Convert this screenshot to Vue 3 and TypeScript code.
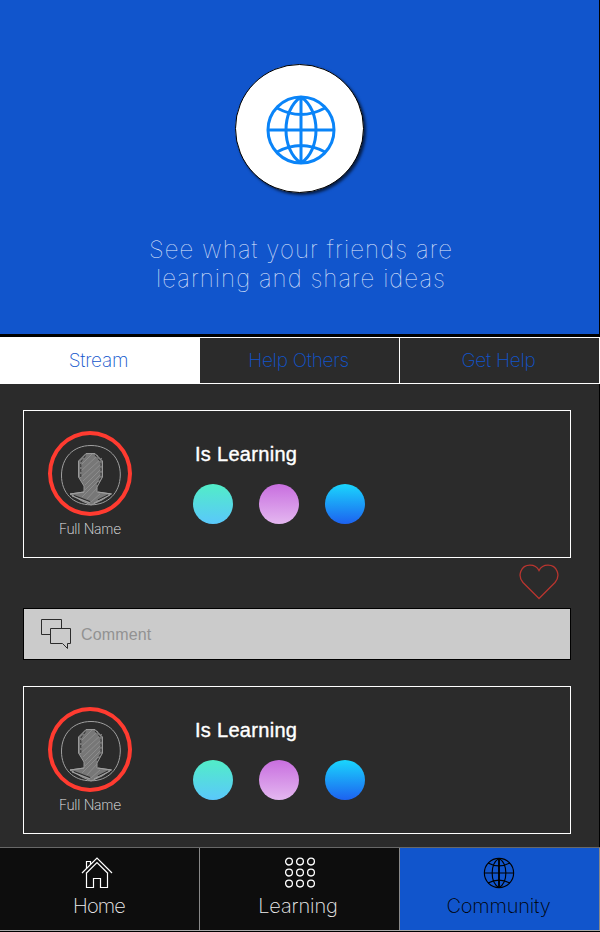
<script setup lang="ts">
import { ref } from 'vue'

interface Post {
  id: number
  name: string
  topics: string[]
  commentable: boolean
}

const tabs = ['Stream', 'Help Others', 'Get Help']
const activeTab = ref('Stream')
const page = ref('Community')

const posts: Post[] = [
  { id: 1, name: 'Full Name', topics: ['mint', 'orchid', 'azure'], commentable: true },
  { id: 2, name: 'Full Name', topics: ['mint', 'orchid', 'azure'], commentable: false },
]
const dots = [5, 16, 27]
</script>

<template>
  <div class="screen">
    <header class="hero">
      <div class="badge">
        <svg class="globe" viewBox="0 0 70 70">
          <circle cx="35" cy="35" r="33" />
          <path d="M35 2V68M2 35H68M35 2C15 15 15 55 35 68M35 2C55 15 55 55 35 68M11 13Q35 26 59 13M11 57Q35 44 59 57" />
        </svg>
      </div>
      <p class="tagline"><span class="line one">See what your friends are</span><span class="line two">learning and share ideas</span></p>
    </header>

    <nav class="tabs">
      <button v-for="tab in tabs" :key="tab" class="tab" :class="{ active: tab === activeTab }" @click="activeTab = tab">
        {{ tab }}
      </button>
    </nav>

    <main class="feed">
      <article v-for="post in posts" :key="post.id" class="post">
        <section class="card">
          <div class="person">
            <div class="ring">
              <svg class="avatar" viewBox="0 0 62 62">
                <path class="rim" d="M31 1.5C49 1.5 60.5 14 60.3 31C60 49 48 60.8 31 60.8C13 60.8 1.3 49 1.5 31C1.7 14 13 1.5 31 1.5Z" />
                <path class="body" d="M26 9.5H35L42.5 17V33L37 43V48L51 50L42 56L31 61L22 57L10 50L24 48V42L18.5 33V17Z" />
                <path class="hatch" d="M20 22L32 10M20 28L38 11M20 34L42 14M23 37L42 19M25 41L42 24M25 46L41 30M22 53L38 37M26 56L37 44M31 58L40 50" />
                <path class="dash" d="M20.8 33V18L26 11M35 11L41 18V33L37 41" />
                <path class="gap" d="M14 51.5L30 57.5M48 51L38 56" />
                <path class="rim" d="M10 50L24 48M12 52L30 59M38 48L52 50M50 51L34 59" />
              </svg>
            </div>
            <span class="name">{{ post.name }}</span>
          </div>
          <div class="learning">
            <h2>Is Learning</h2>
            <div class="topics">
              <span v-for="topic in post.topics" :key="topic" class="topic" :class="topic"></span>
            </div>
          </div>
        </section>
        <template v-if="post.commentable">
          <div class="actions">
            <svg class="heart" viewBox="0 0 40 36">
              <path d="M20 34.5L4 18.5C-2 11.5 2 1.2 11 1.2C15.5 1.2 18.5 3.5 20 6.5C21.5 3.5 24.5 1.2 29 1.2C38 1.2 42 11.5 36 18.5Z" />
            </svg>
          </div>
          <div class="comment">
            <svg class="bubbles" viewBox="0 0 31 31">
              <path d="M9.5 15.5H.5V.5H20.5V9.5M9.5 9.5H29.5V24.5H26.5V29.5L21.5 24.5H9.5Z" />
            </svg>
            <span>Comment</span>
          </div>
        </template>
      </article>
    </main>

    <footer class="dock">
      <button class="item" :class="{ current: page === 'Home' }" @click="page = 'Home'">
        <svg viewBox="0 0 32 32">
          <path d="M1 16L16 1L31 16M5.5 16V30.5H12.5V21.5H19.5V30.5H26.5V16M5 16.5L16 5.5L27 16.5M5.5 12V4.5H9.5V7.5" />
        </svg>
        <span class="home">Home</span>
      </button>
      <button class="item" :class="{ current: page === 'Learning' }" @click="page = 'Learning'">
        <svg class="grid" viewBox="0 0 32 32">
          <template v-for="y in dots" :key="y">
            <circle v-for="x in dots" :key="x" :cx="x" :cy="y - 0.4" r="3.4" />
          </template>
        </svg>
        <span class="learn">Learning</span>
      </button>
      <button class="item" :class="{ current: page === 'Community' }" @click="page = 'Community'">
        <svg viewBox="0 0 70 70" class="small-globe">
          <circle cx="35" cy="35" r="32" />
          <path d="M3 35H67M35 3C15 15 15 55 35 67M35 3C55 15 55 55 35 67M11 13Q35 26 59 13M11 57Q35 44 59 57" />
          <path class="axis" d="M35 3V67" />
        </svg>
        <span class="comm">Community</span>
      </button>
    </footer>
  </div>
</template>

<style>
body {
  margin: 0;
  background: #000;
}
</style>

<style scoped>
* {
  box-sizing: border-box;
}
svg {
  display: block;
  fill: none;
}
button {
  margin: 0;
  padding: 0;
  border: 0;
  background: none;
  font: inherit;
  color: inherit;
}
.screen {
  display: flex;
  flex-direction: column;
  width: 600px;
  height: 932px;
  overflow: hidden;
  background: #000;
  font-family: Inter, "Liberation Sans", sans-serif;
  font-weight: 200;
}
.hero {
  display: flex;
  flex: none;
  flex-direction: column;
  align-items: center;
  width: 599px;
  height: 334px;
  padding-top: 64px;
  background: #1155cc;
}
.badge {
  display: grid;
  place-items: center;
  width: 129px;
  height: 129px;
  padding: 2px 0 0 2px;
  border: 1px solid #000;
  border-radius: 50%;
  background: #fff;
  box-shadow: 2px 2px 3px rgba(0, 0, 0, 0.65);
}
.globe {
  width: 70px;
  height: 70px;
  stroke: #0a84f8;
  stroke-width: 3;
}
.tagline {
  display: flex;
  flex-direction: column;
  align-items: center;
  margin: 42px 0 0;
  padding-left: 3px;
  color: #e8f0ff;
  font-size: 24px;
  font-weight: 100;
  line-height: 29px;
  white-space: nowrap;
}
.line {
  letter-spacing: 1.05px;
}
.one {
  letter-spacing: 1.1px;
}
.tabs {
  display: grid;
  flex: none;
  grid-template-columns: 200px 200px 200px;
  height: 47px;
  margin-top: 3px;
  border-top: 1px solid #fff;
  border-bottom: 1px solid #fff;
  background: #2b2b2b;
}
.tab {
  padding-right: 2px;
  border-right: 1px solid #fff;
  color: #1155cc;
  font-size: 19px;
  font-weight: 200;
  letter-spacing: -0.25px;
}
.tab.active {
  background: #fff;
}
.feed {
  flex: none;
  width: 599px;
  height: 463px;
  padding: 26px 28px 0 23px;
  background: #2b2b2b;
}
.post + .post {
  margin-top: 26px;
}
.card {
  display: flex;
  width: 548px;
  height: 148px;
  border: 1px solid #fff;
}
.person {
  display: flex;
  flex-direction: column;
  align-items: center;
  width: 84px;
  margin: 20px 0 0 24px;
}
.ring {
  display: grid;
  flex: none;
  place-items: center;
  width: 84px;
  height: 85px;
  padding: 2px 0 0 1px;
  border: 4px solid #ff3b30;
  border-radius: 50%;
}
.avatar {
  width: 62px;
  height: 62px;
}
.rim {
  stroke: #a0a0a0;
  stroke-width: 1;
}
.body {
  fill: #777;
  stroke: #999;
}
.hatch {
  stroke: #929292;
  stroke-width: 0.8;
}
.dash {
  stroke: #222;
  stroke-width: 0.9;
  stroke-dasharray: 3 2;
}
.gap {
  stroke: #2b2b2b;
  stroke-width: 1.2;
}
.name {
  margin-top: 4px;
  color: #e8e8e8;
  font-size: 14px;
  line-height: 18px;
  letter-spacing: -0.3px;
  white-space: nowrap;
}
.learning {
  margin: 31px 0 0 61px;
}
h2 {
  margin: 0 0 0 2px;
  color: #fff;
  font-family: "Liberation Sans", sans-serif;
  font-size: 20px;
  font-weight: 400;
  line-height: 24px;
  letter-spacing: 0.3px;
  -webkit-text-stroke: 0.4px #fff;
}
.topics {
  display: flex;
  gap: 26px;
  margin-top: 18px;
}
.topic {
  width: 40px;
  height: 40px;
  border-radius: 50%;
}
.mint {
  background: linear-gradient(#52edc7, #5ac8fb);
}
.orchid {
  background: linear-gradient(#c86edf, #e4b7f0);
}
.azure {
  background: linear-gradient(#1ad6fd, #1d62f0);
}
.actions {
  display: flex;
  justify-content: flex-end;
  height: 50px;
  padding: 6px 12px 0 0;
}
.heart {
  width: 40px;
  height: 36px;
  stroke: #b8352f;
  stroke-width: 1.3;
}
.comment {
  display: flex;
  width: 548px;
  height: 52px;
  padding: 10px 0 0 17px;
  border: 1px solid #000;
  background: #cbcbcb;
  color: #929292;
  font-family: "Liberation Sans", sans-serif;
  font-size: 16px;
  font-weight: 400;
  letter-spacing: 0.15px;
  line-height: 31px;
}
.bubbles {
  width: 31px;
  height: 31px;
  margin-right: 9px;
  stroke: #2b2b2b;
}
.dock {
  display: grid;
  flex: none;
  grid-template-columns: 200px 200px 200px;
  height: 84px;
  border-top: 1px solid #686868;
  border-bottom: 1px solid #aaa;
  background: #0d0d0d;
}
.item {
  display: flex;
  flex-direction: column;
  align-items: center;
  padding-top: 9px;
  border-right: 1px solid #888;
  color: #eee;
  font-size: 20px;
}
.item svg {
  width: 32px;
  height: 32px;
  margin-left: -5px;
  stroke: #fff;
  stroke-width: 1.2;
}
.item svg.grid {
  margin-left: 0;
  stroke-width: 1.3;
}
.item svg.small-globe {
  margin-left: -1px;
  stroke: #000;
  stroke-width: 2.5;
}
.small-globe .axis {
  stroke-width: 4;
}
.item span {
  margin-top: 4px;
  line-height: 26px;
  letter-spacing: -0.2px;
}
.item .home {
  padding-right: 1px;
  letter-spacing: -0.9px;
}
.item .learn {
  padding-right: 3px;
  letter-spacing: -0.1px;
}
.item .comm {
  padding-right: 2px;
}
.current {
  background: #1155cc;
  color: #000;
}
</style>
